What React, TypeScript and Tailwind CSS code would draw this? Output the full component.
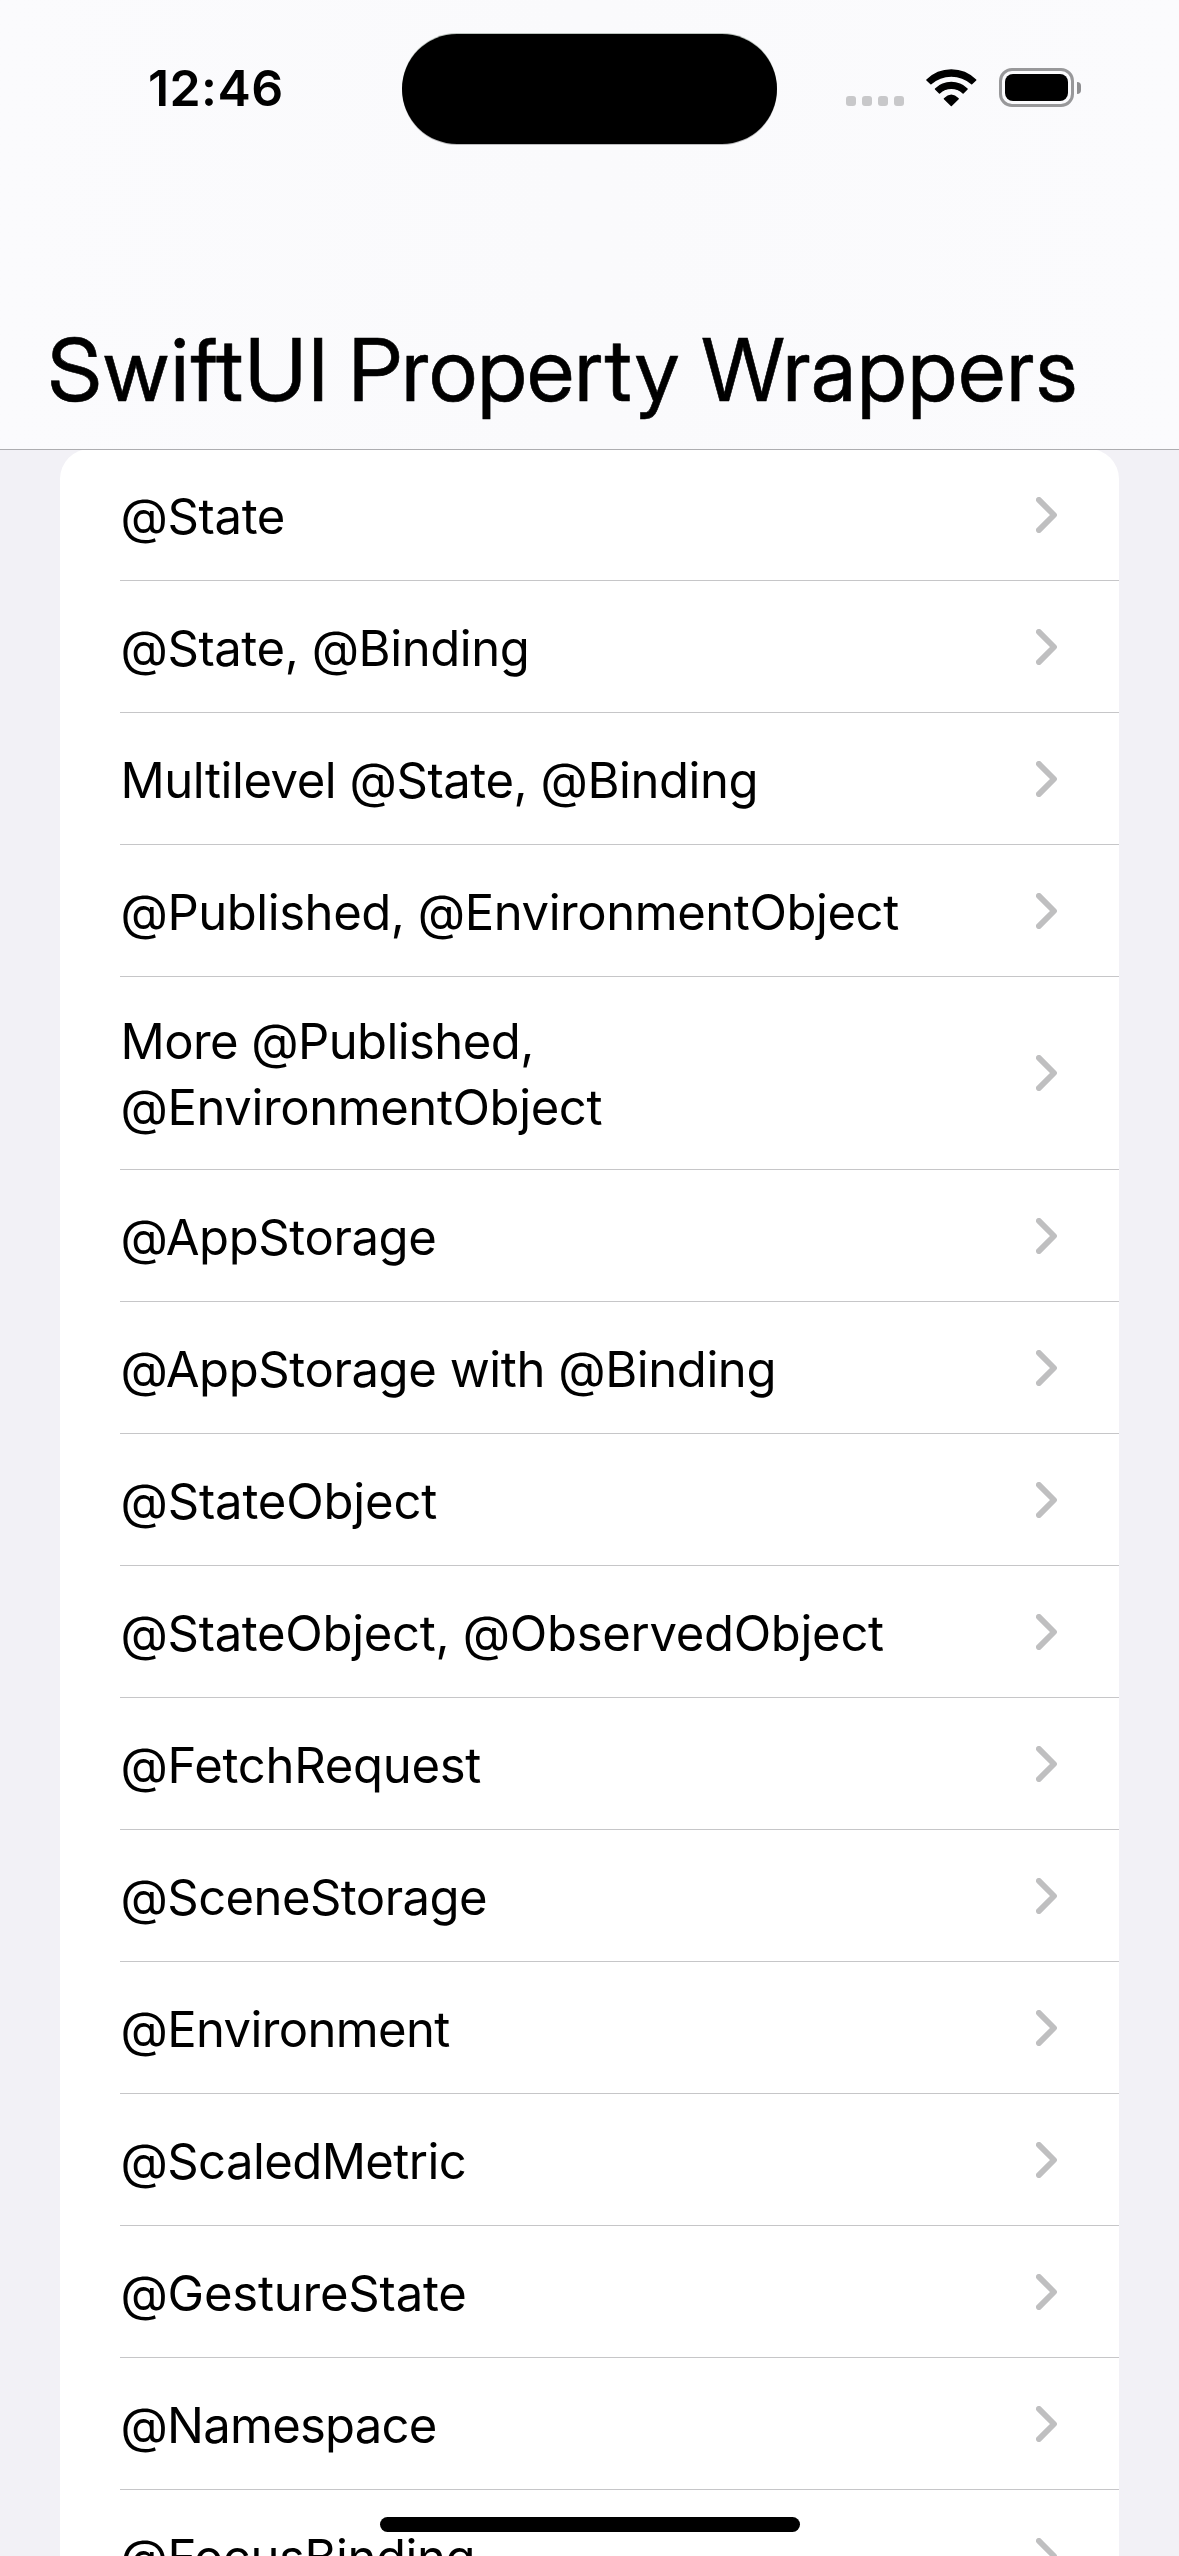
type Line = { text: string; tracking: string };

const rows: Line[][] = [
  [{ text: "@State", tracking: "tracking-[-0.35px]" }],
  [{ text: "@State, @Binding", tracking: "tracking-[-0.42px]" }],
  [{ text: "Multilevel @State, @Binding", tracking: "tracking-[-0.45px]" }],
  [{ text: "@Published, @EnvironmentObject", tracking: "tracking-[-0.44px]" }],
  [
    { text: "More @Published,", tracking: "tracking-[-0.58px]" },
    { text: "@EnvironmentObject", tracking: "tracking-[-0.4px]" },
  ],
  [{ text: "@AppStorage", tracking: "tracking-[-0.42px]" }],
  [{ text: "@AppStorage with @Binding", tracking: "tracking-[-0.42px]" }],
  [{ text: "@StateObject", tracking: "tracking-[-0.16px]" }],
  [{ text: "@StateObject, @ObservedObject", tracking: "tracking-[-0.3px]" }],
  [{ text: "@FetchRequest", tracking: "tracking-[-0.28px]" }],
  [{ text: "@SceneStorage", tracking: "tracking-[-0.56px]" }],
  [{ text: "@Environment", tracking: "tracking-[-0.64px]" }],
  [{ text: "@ScaledMetric", tracking: "tracking-[-0.58px]" }],
  [{ text: "@GestureState", tracking: "tracking-[-0.21px]" }],
  [{ text: "@Namespace", tracking: "tracking-[-0.75px]" }],
  [{ text: "@FocusBinding", tracking: "tracking-[-0.44px]" }],
];

function Chevron() {
  return (
    <svg className="mr-[62px] h-9 w-[21px] shrink-0" viewBox="0 0 21 36" fill="none">
      <path
        d="M2.9 2.9L18 18L2.9 33.1"
        stroke="#bfbfc0"
        strokeWidth="5.8"
        strokeLinecap="round"
        strokeLinejoin="round"
      />
    </svg>
  );
}

function WifiIcon() {
  return (
    <svg
      className="ml-[22px] h-[38px] w-[51px]"
      viewBox="0 0 51 38"
      fill="#000"
      stroke="#000"
      strokeWidth="1.4"
      strokeLinejoin="round"
    >
      <path d="M0.9 11.1A34.5 34.5 0 0 1 49.7 11.1L45.7 14.8A30.5 30.5 0 0 0 4.9 14.8Z" />
      <path d="M9.5 19.9A22.8 22.8 0 0 1 41.1 19.9L37.1 24A17.5 17.5 0 0 0 13.5 24Z" />
      <path d="M18.4 29.7Q25.3 22.8 32.2 29.7L25.3 36.6Z" />
    </svg>
  );
}

function Battery() {
  return (
    <div className="ml-[22px] flex items-center gap-[3px]">
      <div className="h-[39px] w-[75px] rounded-[13px] border-[3px] border-[#98989a] p-[3px]">
        <div className="h-full w-full rounded-[8px] bg-black" />
      </div>
      <div className="h-3 w-1 rounded-r-[4px] bg-[#8e8e90]" />
    </div>
  );
}

function StatusBar() {
  return (
    <div className="flex h-[177px] items-start">
      <div className="w-[402px] pt-[58px] pl-[148px] text-[50px] leading-[60px] font-semibold tracking-[0.4px]">
        12:46
      </div>
      <div className="mt-[34px] h-[110px] w-[375px] rounded-[55px] bg-black shadow-[0_1px_0_#bcbcbe,0_-1px_0_#bcc4be]" />
      <div className="mt-[68px] ml-[69px] flex h-[39px] items-center">
        <div className="flex gap-[6px] self-end pb-px">
          {[0, 1, 2, 3].map((i) => (
            <div key={i} className="size-[10px] rounded-[3px] bg-[#c8c8ca]" />
          ))}
        </div>
        <WifiIcon />
        <Battery />
      </div>
    </div>
  );
}

export default function App() {
  return (
    <div className="relative flex h-[2556px] w-[1179px] flex-col overflow-hidden bg-[#f2f1f6] font-[Inter,sans-serif] text-black">
      <header className="h-[450px] shrink-0 border-b border-[#adadb0] bg-linear-to-r from-[#fbfbfd] via-[#fafafc] to-[#fbfbfd]">
        <StatusBar />
        <h1 className="pt-[140px] pl-[48px] font-['Inter_Display',Inter,sans-serif] text-[87px] leading-[106px] font-normal whitespace-nowrap [-webkit-text-stroke:0.6px_black]">
          <span className="tracking-[1.9px] [font-feature-settings:'calt'_0,'liga'_0]">SwiftUI</span>{" "}
          <span className="-ml-[3.5px] tracking-[0.6px]">Property</span>{" "}
          <span className="tracking-[1.4px]">Wrappers</span>
        </h1>
      </header>
      <ul className="mx-[60px] -mt-px rounded-t-[30px] bg-white [clip-path:inset(1px_0_0_0)]">
        {rows.map((lines) => (
          <li
            key={lines.map((l) => l.text).join(" ")}
            className={
              lines.length > 1
                ? "ml-[60px] flex h-[193px] items-center border-b border-[#c6c6c8]"
                : "ml-[60px] flex h-[132px] items-center border-b border-[#c6c6c8]"
            }
          >
            <div className={lines.length > 1 ? "flex-1 pt-1 pl-[0.5px]" : "flex-1 pt-[5px] pl-[0.5px]"}>
              {lines.map((l) => (
                <div key={l.text} className="text-[49px] leading-[66px] whitespace-nowrap">
                  <span className={l.tracking}>{l.text}</span>
                </div>
              ))}
            </div>
            <Chevron />
          </li>
        ))}
      </ul>
      <div className="absolute bottom-6 left-[380px] h-[15px] w-[420px] rounded-full bg-black" />
    </div>
  );
}
